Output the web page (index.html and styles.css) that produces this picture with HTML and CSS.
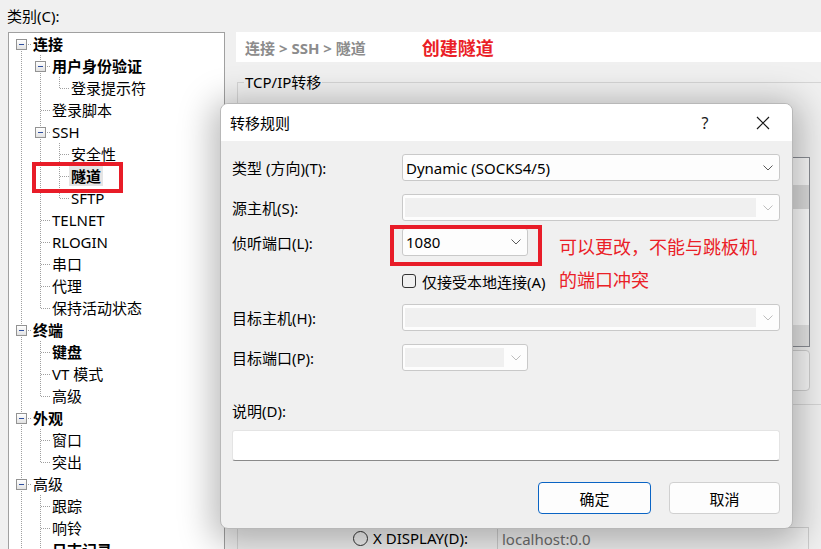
FILE: index.html
```html
<!DOCTYPE html>
<html>
<head>
<meta charset="utf-8">
<link rel="stylesheet" href="styles.css">
</head>
<body>
<div class="app">
  <div class="cat-label">类别(C):</div>
  <div class="main">
    <div class="tree">
      <div class="row"><span class="c bf"><i class="box"></i></span><span class="lbl b">连接</span></div>
      <div class="row"><span class="c i"></span><span class="c bt"><i class="box"></i></span><span class="lbl b">用户身份验证</span></div>
      <div class="row"><span class="c i"></span><span class="c i"></span><span class="c l"></span><span class="lbl">登录提示符</span></div>
      <div class="row"><span class="c i"></span><span class="c t"></span><span class="lbl">登录脚本</span></div>
      <div class="row"><span class="c i"></span><span class="c bt"><i class="box"></i></span><span class="lbl">SSH</span></div>
      <div class="row"><span class="c i"></span><span class="c i"></span><span class="c t"></span><span class="lbl">安全性</span></div>
      <div class="row"><span class="c i"></span><span class="c i"></span><span class="c t"></span><span class="lbl b sel">隧道</span></div>
      <div class="row"><span class="c i"></span><span class="c i"></span><span class="c l"></span><span class="lbl">SFTP</span></div>
      <div class="row"><span class="c i"></span><span class="c t"></span><span class="lbl">TELNET</span></div>
      <div class="row"><span class="c i"></span><span class="c t"></span><span class="lbl">RLOGIN</span></div>
      <div class="row"><span class="c i"></span><span class="c t"></span><span class="lbl">串口</span></div>
      <div class="row"><span class="c i"></span><span class="c t"></span><span class="lbl">代理</span></div>
      <div class="row"><span class="c i"></span><span class="c l"></span><span class="lbl">保持活动状态</span></div>
      <div class="row"><span class="c bt"><i class="box"></i></span><span class="lbl b">终端</span></div>
      <div class="row"><span class="c i"></span><span class="c t"></span><span class="lbl b">键盘</span></div>
      <div class="row"><span class="c i"></span><span class="c t"></span><span class="lbl">VT 模式</span></div>
      <div class="row"><span class="c i"></span><span class="c l"></span><span class="lbl">高级</span></div>
      <div class="row"><span class="c bt"><i class="box"></i></span><span class="lbl b">外观</span></div>
      <div class="row"><span class="c i"></span><span class="c t"></span><span class="lbl">窗口</span></div>
      <div class="row"><span class="c i"></span><span class="c l"></span><span class="lbl">突出</span></div>
      <div class="row"><span class="c bt"><i class="box"></i></span><span class="lbl">高级</span></div>
      <div class="row"><span class="c i"></span><span class="c t"></span><span class="lbl">跟踪</span></div>
      <div class="row"><span class="c i"></span><span class="c t"></span><span class="lbl">响铃</span></div>
      <div class="row"><span class="c i"></span><span class="c t"></span><span class="lbl b">日志记录</span></div>
    </div>
    <div class="pane">
      <div class="crumb"><span class="crumb-text">连接 &gt; SSH &gt; 隧道</span><span class="crumb-note">创建隧道</span></div>
      <fieldset class="group">
        <legend>TCP/IP转移</legend>
        <div class="list">
          <div class="list-head"></div>
          <div class="list-sel"></div>
          <div class="list-fill"></div>
          <div class="list-scroll"></div>
        </div>
        <div class="pbtn"></div>
      </fieldset>
      <div class="x11">
        <div class="xrow">
          <span class="radio"></span>
          <span class="xlabel">X DISPLAY(D):</span>
          <span class="xinput">localhost:0.0</span>
        </div>
      </div>
    </div>
  </div>

  <div class="dialog">
    <div class="titlebar">
      <span class="title">转移规则</span>
      <span class="cap help">?</span>
      <span class="cap close"><svg width="14" height="14" viewBox="0 0 14 14"><path d="M1 1 L13 13 M13 1 L1 13" stroke="#1a1a1a" stroke-width="1.2" fill="none"/></svg></span>
    </div>
    <div class="dbody">
      <div class="frow">
        <span class="flabel">类型 (方向)(T):</span>
        <span class="combo"><span class="val">Dynamic (SOCKS4/5)</span><span class="chev"><svg width="10" height="6" viewBox="0 0 10 6"><path d="M0.5 0.5 L5 5 L9.5 0.5" stroke="#5a5a5a" stroke-width="1" fill="none"/></svg></span></span>
      </div>
      <div class="frow r2">
        <span class="flabel">源主机(S):</span>
        <span class="combo dis"><span class="val"></span><span class="chev"><svg width="10" height="6" viewBox="0 0 10 6"><path d="M0.5 0.5 L5 5 L9.5 0.5" stroke="#bdbdbd" stroke-width="1" fill="none"/></svg></span></span>
      </div>
      <div class="frow r3">
        <span class="flabel">侦听端口(L):</span>
        <span class="combo short"><span class="val">1080</span><span class="chev"><svg width="10" height="6" viewBox="0 0 10 6"><path d="M0.5 0.5 L5 5 L9.5 0.5" stroke="#5a5a5a" stroke-width="1" fill="none"/></svg></span></span>
      </div>
      <div class="frow chk">
        <span class="flabel"></span>
        <span class="checkbox"></span>
        <span class="chklabel">仅接受本地连接(A)</span>
      </div>
      <div class="frow r5">
        <span class="flabel">目标主机(H):</span>
        <span class="combo dis"><span class="val"></span><span class="chev"><svg width="10" height="6" viewBox="0 0 10 6"><path d="M0.5 0.5 L5 5 L9.5 0.5" stroke="#bdbdbd" stroke-width="1" fill="none"/></svg></span></span>
      </div>
      <div class="frow r6">
        <span class="flabel">目标端口(P):</span>
        <span class="combo short dis"><span class="val"></span><span class="chev"><svg width="10" height="6" viewBox="0 0 10 6"><path d="M0.5 0.5 L5 5 L9.5 0.5" stroke="#bdbdbd" stroke-width="1" fill="none"/></svg></span></span>
      </div>
      <div class="desc-label">说明(D):</div>
      <div class="tfield"></div>
      <div class="btns">
        <span class="btn primary">确定</span>
        <span class="btn cancel">取消</span>
      </div>
    </div>
  </div>

  <div class="mark mark-tunnel"></div>
  <div class="mark mark-port"></div>
  <div class="note">可以更改，不能与跳板机<br>的端口冲突</div>
</div>
</body>
</html>
```

FILE: styles.css
```css
* { box-sizing: border-box; }
html, body { margin: 0; padding: 0; }
body {
  background: #f0f0f0;
  font-family: "Noto Sans", "Noto Sans CJK SC", sans-serif;
  font-size: 15px;
  color: #000;
}
.app {
  position: relative;
  width: 821px;
  height: 549px;
  overflow: hidden;
  background: #f0f0f0;
}
.cat-label {
  height: 32px;
  line-height: 32px;
  padding-left: 7px;
}
.main {
  display: flex;
  padding-left: 8px;
  height: 517px;
}

/* tree */
.tree {
  width: 217px;
  flex: none;
  height: 540px;
  background: #fff;
  border: 1px solid #a0a0a0;
  padding-left: 3px;
}
.row {
  display: flex;
  align-items: center;
  height: 22px;
}
.c {
  width: 19px;
  height: 22px;
  flex: none;
  display: flex;
  align-items: center;
  justify-content: center;
}
.i {
  background: repeating-linear-gradient(to bottom, #a0a0a0 0 1px, transparent 1px 2px) 9px 0 / 1px 22px no-repeat;
}
.t, .bt {
  background:
    repeating-linear-gradient(to right, #a0a0a0 0 1px, transparent 1px 2px) 10px 11px / 9px 1px no-repeat,
    repeating-linear-gradient(to bottom, #a0a0a0 0 1px, transparent 1px 2px) 9px 0 / 1px 22px no-repeat;
}
.l {
  background:
    repeating-linear-gradient(to right, #a0a0a0 0 1px, transparent 1px 2px) 10px 11px / 9px 1px no-repeat,
    repeating-linear-gradient(to bottom, #a0a0a0 0 1px, transparent 1px 2px) 9px 0 / 1px 11px no-repeat;
}
.bf {
  background:
    repeating-linear-gradient(to right, #a0a0a0 0 1px, transparent 1px 2px) 10px 11px / 9px 1px no-repeat,
    repeating-linear-gradient(to bottom, #a0a0a0 0 1px, transparent 1px 2px) 9px 12px / 1px 10px no-repeat;
}
.box {
  width: 11px;
  height: 11px;
  border: 1px solid #939393;
  background: linear-gradient(#ffffff, #e2e2e2);
  display: flex;
  align-items: center;
  justify-content: center;
}
.box::after {
  content: "";
  width: 5px;
  height: 1px;
  background: #2f4f9f;
}
.lbl {
  height: 20px;
  line-height: 20px;
  padding: 0 2px;
  white-space: nowrap;
}
.lbl.b { font-weight: 700; }
.lbl.sel { background: #e5e5e5; }

/* right pane */
.pane {
  flex: 1;
  margin-left: 7px;
  min-width: 0;
}
.crumb {
  margin-left: 4px;
  height: 30px;
  background: #fff;
  display: flex;
  align-items: center;
  padding-left: 9px;
  white-space: nowrap;
}
.crumb-text {
  color: #8c8c8c;
  font-weight: 700;
}
.crumb-note {
  margin-left: 56px;
  color: #ea1f28;
  font-weight: 700;
  font-size: 18px;
}
.group {
  margin: 10px 0 0 5px;
  width: 640px;
  height: 333px;
  border: 1px solid #d5d5d5;
  padding: 0 0 0 6px;
  min-inline-size: 0;
}
.group legend {
  padding: 0 1px;
  line-height: 20px;
}
.list {
  margin: 65px 0 0 1px;
  width: 565px;
  height: 190px;
  border: 1px solid #8a8d94;
  background: #fff;
  display: flex;
  flex-direction: column;
}
.list-head { height: 27px; background: #fafafa; }
.list-sel { height: 24px; background: #dcdcdc; }
.list-fill { flex: 1; }
.list-scroll { height: 21px; background: #e6e6e6; }
.pbtn {
  margin: 3px 0 0 465px;
  width: 101px;
  height: 41px;
  border: 1px solid #cfcfcf;
  border-radius: 4px;
  background: #f8f8f8;
}
.x11 {
  margin: 12px 0 0 5px;
  height: 200px;
  border-left: 1px solid #d5d5d5;
  padding-top: 110px;
}
.xrow {
  display: flex;
  align-items: flex-start;
  padding-left: 115px;
  white-space: nowrap;
}
.radio {
  width: 15px;
  height: 15px;
  margin-top: 4px;
  border: 1px solid #333;
  border-radius: 50%;
  flex: none;
}
.xlabel {
  margin-left: 5px;
  width: 124px;
  line-height: 22px;
  flex: none;
}
.xinput {
  width: 312px;
  height: 26px;
  line-height: 22px;
  padding-left: 4px;
  color: #6d6d6d;
  border: 1px solid #cdcdcd;
  background: #f0f0f0;
  flex: none;
}

/* dialog */
.dialog {
  position: absolute;
  left: 220px;
  top: 103px;
  width: 573px;
  background: #f0f0f0;
  border: 1px solid #b8b8b8;
  border-radius: 8px;
  box-shadow: 0 6px 34px 8px rgba(0, 0, 0, 0.27);
  overflow: hidden;
}
.titlebar {
  height: 37px;
  background: #fff;
  display: flex;
  align-items: center;
}
.title {
  flex: 1;
  padding-left: 9px;
}
.cap {
  width: 58px;
  height: 37px;
  display: flex;
  align-items: center;
  justify-content: center;
  color: #1a1a1a;
  font-size: 16px;
}
.dbody {
  padding: 13px 12px 14px 11px;
  display: flex;
  flex-direction: column;
}
.frow {
  display: flex;
  align-items: center;
  height: 27px;
  white-space: nowrap;
}
.frow.r2 { margin-top: 13px; }
.frow.r3 { margin-top: 7px; height: 28px; }
.frow.chk { margin-top: 14px; height: 22px; }
.frow.r5 { margin-top: 12px; }
.frow.r6 { margin-top: 13px; }
.flabel {
  width: 170px;
  flex: none;
}
.combo {
  flex: 1;
  height: 100%;
  background: #fdfdfd;
  border: 1px solid #c9c9c9;
  border-radius: 3px;
  display: flex;
  align-items: center;
  padding-left: 3px;
}
.combo.short {
  flex: none;
  width: 126px;
}
.combo .val {
  flex: 1;
}
.combo.dis {
  padding-left: 2px;
}
.combo.dis .val {
  align-self: stretch;
  margin: 3px 0;
  background: #f0f0f0;
}
.chev {
  width: 23px;
  flex: none;
  display: flex;
  justify-content: center;
  align-items: center;
}
.checkbox {
  width: 14px;
  height: 14px;
  border: 1px solid #333;
  border-radius: 3px;
  flex: none;
}
.chklabel {
  margin-left: 6px;
}
.desc-label {
  margin-top: 30px;
  height: 20px;
  line-height: 20px;
}
.tfield {
  margin-top: 9px;
  height: 31px;
  background: #fff;
  border: 1px solid #e4e4e4;
  border-bottom-color: #8a8a8a;
  border-radius: 3px;
}
.btns {
  margin-top: 21px;
  height: 32px;
  display: flex;
  justify-content: flex-end;
  gap: 18px;
}
.btn {
  height: 32px;
  display: flex;
  align-items: center;
  justify-content: center;
  background: #fdfdfd;
  border: 1px solid #d0d0d0;
  border-radius: 4px;
}
.btn.primary {
  width: 113px;
  border-color: #0a64c4;
}
.btn.cancel {
  width: 111px;
}

/* annotations */
.mark {
  position: absolute;
  border: 4px solid #e81c28;
}
.mark-tunnel {
  left: 32px;
  top: 162px;
  width: 91px;
  height: 31px;
}
.mark-port {
  left: 390px;
  top: 225px;
  width: 152px;
  height: 41px;
}
.note {
  position: absolute;
  left: 559px;
  top: 231px;
  color: #ea2027;
  font-size: 18px;
  line-height: 33px;
  white-space: nowrap;
}
```
